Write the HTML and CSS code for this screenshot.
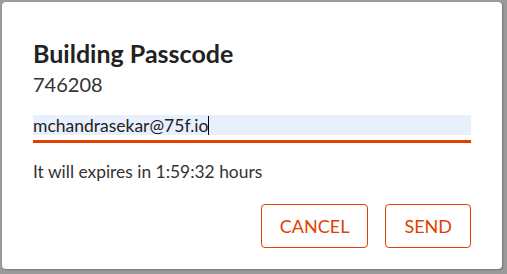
FILE: index.html
```html
<!DOCTYPE html>
<html>
<head>
<meta charset="utf-8">
<link rel="stylesheet" href="styles.css">
</head>
<body>
<div class="dialog">
  <h1 class="title">Building Passcode</h1>
  <div class="code">746208</div>
  <div class="field">
    <div class="input"><span class="value">mchandrasekar@75f.io</span><span class="caret"></span></div>
  </div>
  <p class="expiry">It will expires in 1:59:32 hours</p>
  <div class="actions">
    <button class="btn">CANCEL</button>
    <button class="btn">SEND</button>
  </div>
</div>
</body>
</html>
```

FILE: styles.css
```css
html, body {
  margin: 0;
  padding: 0;
}
body {
  width: 507px;
  height: 274px;
  background: #9b9b9b;
  font-family: Lato, "Open Sans", sans-serif;
  padding: 2px 5px 5px 2px;
  box-sizing: border-box;
}
.dialog {
  background: #fff;
  border-radius: 4px;
  height: 267px;
  box-sizing: border-box;
  padding: 36px 31px 0 31px;
  box-shadow: 1px 1px 2px rgba(0,0,0,0.25);
}
.title {
  margin: 0;
  font-size: 25px;
  font-weight: 700;
  color: #222;
  line-height: 30px;
}
.code {
  font-size: 20px;
  color: #333;
  line-height: 24px;
  margin-top: 4px;
}
.field {
  margin-top: 19px;
  border-bottom: 3px solid #e04100;
  padding-bottom: 5px;
}
.input {
  background: #e8f0fe;
  height: 20px;
  display: flex;
  align-items: center;
  font-size: 17.5px;
  color: #222;
}
.caret {
  display: inline-block;
  width: 1px;
  height: 19px;
  background: #000;
}
.expiry {
  margin: 19px 0 0;
  font-size: 17.4px;
  color: #333;
  line-height: 20px;
}
.actions {
  display: flex;
  justify-content: flex-end;
  gap: 17px;
  margin-top: 22px;
}
.btn {
  font-family: inherit;
  background: #fff;
  color: #e04100;
  border: 1px solid #e04100;
  border-radius: 4px;
  height: 44px;
  font-size: 18px;
  padding: 0 18px;
}
```
